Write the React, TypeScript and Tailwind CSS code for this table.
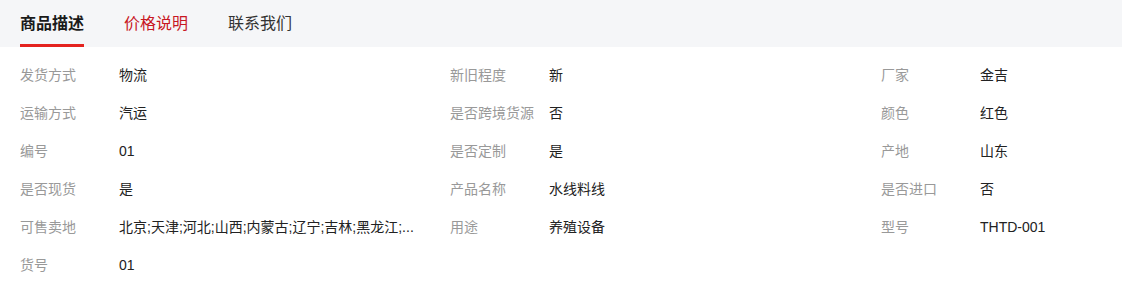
import React from "react";

const rows: [string, string][][] = [
  [["发货方式", "物流"], ["新旧程度", "新"], ["厂家", "金吉"]],
  [["运输方式", "汽运"], ["是否跨境货源", "否"], ["颜色", "红色"]],
  [["编号", "01"], ["是否定制", "是"], ["产地", "山东"]],
  [["是否现货", "是"], ["产品名称", "水线料线"], ["是否进口", "否"]],
  [["可售卖地", "北京;天津;河北;山西;内蒙古;辽宁;吉林;黑龙江;..."], ["用途", "养殖设备"], ["型号", "THTD-001"]],
  [["货号", "01"]],
];

export default function App() {
  return (
    <div
      className="w-[1122px] h-[299px] bg-white overflow-hidden"
      style={{ fontFamily: '"Liberation Sans", "Noto Sans CJK SC", sans-serif' }}
    >
      <div className="h-[47px] bg-[#f5f6f8] flex px-[20px] gap-[40px]">
        <div className="h-full flex flex-col items-center justify-center relative text-[16px] font-bold text-[#1a1a1a]">
          商品描述
          <div className="absolute bottom-0 left-0 right-0 h-[3px] bg-[#e4231f]" />
        </div>
        <div className="h-full flex items-center text-[16px] text-[#c81623]">价格说明</div>
        <div className="h-full flex items-center text-[16px] text-[#333]">联系我们</div>
      </div>
      <div className="pt-[9px] pl-[20px]">
        {rows.map((r, i) => (
          <div key={i} className="grid grid-cols-[430px_431px_1fr] h-[38px] items-center text-[14px]">
            {r.map(([k, v], j) => (
              <div key={j} className="flex items-center min-w-0">
                <span className="w-[99px] shrink-0 text-[#999]">{k}</span>
                <span className="whitespace-nowrap text-[#222]">{v}</span>
              </div>
            ))}
          </div>
        ))}
      </div>
    </div>
  );
}
